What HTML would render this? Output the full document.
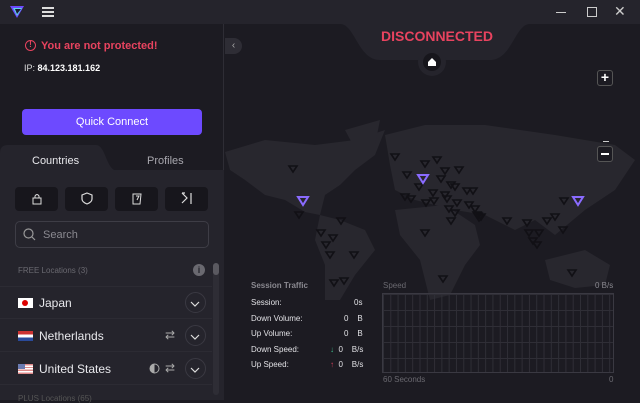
<!DOCTYPE html>
<html><head><style>
*{margin:0;padding:0;box-sizing:border-box}
body{width:640px;height:400px;overflow:hidden;background:#1c1b22;font-family:"Liberation Sans",sans-serif;color:#e8e8ec;position:relative}
.abs{position:absolute}
.tb{left:0;top:0;width:640px;height:24px;background:#25242c}
.left{left:0;top:24px;width:224px;height:376px;background:#1c1b22;border-right:1px solid #2e2d35}
.fbtn{position:absolute;top:187px;width:43px;height:24px;background:#17161c;border-radius:4px}
.row{position:absolute;left:0;width:212px;height:32px;border-bottom:1px solid #2c2b33;font-size:12px}
.chev{position:absolute;right:6px;top:5px;width:21px;height:21px;border:1px solid #3a3942;border-radius:50%}
.st{font-size:8px;color:#e0e0e4;position:absolute}
</style></head><body>
<div class="abs tb"></div>
<svg class="abs" style="left:9px;top:4px" width="16" height="16" viewBox="0 0 16 16"><path d="M1 2 L15 2 L8 14Z" fill="#6d4aff"/><path d="M4 4 L13 4 L8 12Z" fill="#5cd4e8"/><path d="M6 5 L12 5 L8 10Z" fill="#1a1a30"/></svg>
<div class="abs" style="left:42px;top:7px;width:12px;height:2px;background:#ddd;box-shadow:0 4px #ddd,0 8px #ddd"></div>
<div class="abs" style="left:556px;top:12px;width:10px;height:1px;background:#ccc"></div>
<div class="abs" style="left:587px;top:7px;width:10px;height:10px;border:1px solid #ccc"></div>
<div class="abs" style="left:614px;top:3px;font-size:14px;color:#ccc">✕</div>
<!-- map -->
<svg class="abs" style="left:225px;top:100px" width="415" height="200">
<g fill="#28272e">
<path d="M0 52 L40 40 L90 45 L130 40 L160 30 L150 55 L130 70 L115 85 L100 95 L95 115 L80 112 L60 100 L40 95 L20 80 L5 70Z"/>
<path d="M95 115 L115 120 L140 130 L150 150 L130 175 L115 200 L100 200 L100 165 L90 140Z"/>
<path d="M160 35 L200 25 L260 25 L330 35 L390 45 L410 60 L390 90 L360 110 L330 135 L310 120 L290 130 L260 115 L230 110 L210 105 L190 100 L170 90 L165 65Z"/>
<path d="M170 110 L220 105 L250 125 L255 145 L240 165 L225 195 L205 200 L195 160 L175 135Z"/>
<path d="M320 160 L360 150 L385 165 L380 185 L350 188 L325 180Z"/>
<path d="M120 30 L155 20 L150 45 L128 45Z"/>
</g></svg>
<svg class="abs" style="left:225px;top:120px" width="415" height="180" fill="none" stroke="#111015" stroke-width="1.6">
<g id="t"></g>
<path d="M64 46 l8 0 l-4 6z M166 34 l8 0 l-4 6z M196 41 l8 0 l-4 6z M208 37 l8 0 l-4 6z M216 48 l8 0 l-4 6z M230 47 l8 0 l-4 6z M178 52 l8 0 l-4 6z M212 56 l8 0 l-4 6z M222 62 l8 0 l-4 6z M190 64 l8 0 l-4 6z M204 70 l8 0 l-4 6z M216 72 l8 0 l-4 6z M226 64 l8 0 l-4 6z M238 68 l8 0 l-4 6z M176 74 l8 0 l-4 6z M182 76 l8 0 l-4 6z M205 78 l8 0 l-4 6z M218 76 l8 0 l-4 6z M228 80 l8 0 l-4 6z M226 90 l8 0 l-4 6z M240 82 l8 0 l-4 6z M220 86 l8 0 l-4 6z M246 86 l8 0 l-4 6z M197 80 l8 0 l-4 6z M244 68 l8 0 l-4 6z M70 92 l8 0 l-4 6z M112 98 l8 0 l-4 6z M92 110 l8 0 l-4 6z M104 115 l8 0 l-4 6z M97 122 l8 0 l-4 6z M101 132 l8 0 l-4 6z M125 132 l8 0 l-4 6z M105 160 l8 0 l-4 6z M115 158 l8 0 l-4 6z M196 110 l8 0 l-4 6z M214 156 l8 0 l-4 6z M248 92 l8 0 l-4 6z M252 94 l8 0 l-4 6z M222 98 l8 0 l-4 6z M249 93 l8 0 l-4 6z M249 93 l8 0 l-4 6z M250 95 l8 0 l-4 6z M249 93 l8 0 l-4 6z M250 95 l8 0 l-4 6z M249 93 l8 0 l-4 6z M249 93 l8 0 l-4 6z M249 93 l8 0 l-4 6z M249 93 l8 0 l-4 6z M249 93 l8 0 l-4 6z M249 93 l8 0 l-4 6z M249 93 l8 0 l-4 6z M249 93 l8 0 l-4 6z M249 93 l8 0 l-4 6z M249 93 l8 0 l-4 6z M250 95 l8 0 l-4 6z M249 93 l8 0 l-4 6z M250 95 l8 0 l-4 6z M249 93 l8 0 l-4 6z M249 93 l8 0 l-4 6z M249 93 l8 0 l-4 6z M249 93 l8 0 l-4 6z M249 93 l8 0 l-4 6z M249 93 l8 0 l-4 6z M249 93 l8 0 l-4 6z M249 93 l8 0 l-4 6z M249 93 l8 0 l-4 6z M249 93 l8 0 l-4 6z M249 93 l8 0 l-4 6z M249 93 l8 0 l-4 6z M278 98 l8 0 l-4 6z M298 100 l8 0 l-4 6z M318 98 l8 0 l-4 6z M326 94 l8 0 l-4 6z M334 107 l8 0 l-4 6z M300 110 l8 0 l-4 6z M310 110 l8 0 l-4 6z M304 118 l8 0 l-4 6z M308 122 l8 0 l-4 6z M335 78 l8 0 l-4 6z M343 150 l8 0 l-4 6z"/>
</svg>
<svg class="abs" style="left:225px;top:120px" width="415" height="180" fill="none" stroke="#8a6bff" stroke-width="2"><path d="M73 77 h10 l-5 8z M193 55 h10 l-5 8z M348 77 h10 l-5 8z"/></svg>
<!-- disconnected tab -->
<svg class="abs" style="left:340px;top:24px" width="190" height="40"><path d="M0 0 H190 C175 0 172 36 150 36 H40 C18 36 15 0 0 0Z" fill="#25242c"/></svg>
<div class="abs" style="left:381px;top:28px;font-size:14px;font-weight:bold;color:#e8435f">DISCONNECTED</div>
<div class="abs" style="left:418px;top:48px;width:28px;height:28px;border-radius:50%;background:#25242c"></div>
<div class="abs" style="left:423px;top:53px;width:18px;height:18px;border-radius:50%;background:#17161c"></div>
<svg class="abs" style="left:427px;top:57px" width="10" height="10"><path d="M1 5 L5 1 L9 5 V9 H1Z" fill="#fff"/></svg>
<div class="abs" style="left:225px;top:38px;width:17px;height:16px;border-radius:0 8px 8px 0;background:#2e2d35;color:#aaa;font-size:10px;text-align:center;line-height:16px">‹</div>
<!-- zoom controls -->
<div class="abs" style="left:597px;top:70px;width:16px;height:16px;border:1px solid #555;border-radius:3px;background:#1c1b22;color:#fff;font-size:14px;text-align:center;line-height:13px;font-weight:bold">+</div>
<div class="abs" style="left:603px;top:141px;width:6px;height:1px;background:#ccc"></div>
<div class="abs" style="left:597px;top:146px;width:16px;height:16px;border:1px solid #555;border-radius:3px;background:#1c1b22"></div>
<div class="abs" style="left:601px;top:153px;width:8px;height:2px;background:#fff"></div>
<!-- stats -->
<div class="st" style="left:251px;top:281px;color:#8a8990;font-weight:bold">Session Traffic</div>
<div class="st" style="left:251px;top:298px">Session:</div><div class="st" style="left:354px;top:298px">0s</div>
<div class="st" style="left:251px;top:314px">Down Volume:</div><div class="st" style="left:344px;top:314px">0&nbsp;&nbsp;&nbsp;&nbsp;B</div>
<div class="st" style="left:251px;top:329px">Up Volume:</div><div class="st" style="left:344px;top:329px">0&nbsp;&nbsp;&nbsp;&nbsp;B</div>
<div class="st" style="left:251px;top:345px">Down Speed:</div><div class="st" style="left:330px;top:345px"><span style="color:#3fb88a">↓</span>&nbsp;&nbsp;0&nbsp;&nbsp;&nbsp;&nbsp;B/s</div>
<div class="st" style="left:251px;top:360px">Up Speed:</div><div class="st" style="left:330px;top:360px"><span style="color:#d0405a">↑</span>&nbsp;&nbsp;0&nbsp;&nbsp;&nbsp;&nbsp;B/s</div>
<div class="st" style="left:383px;top:281px;color:#6a6970">Speed</div><div class="st" style="left:595px;top:281px;color:#8a8990">0 B/s</div>
<div class="abs" style="left:382px;top:293px;width:232px;height:80px;border:1px solid #3a3942;background-image:linear-gradient(90deg,#2f2e36 1px,transparent 1px),linear-gradient(#2f2e36 1px,transparent 1px);background-size:7.3px 100%,100% 16px"></div>
<div class="st" style="left:383px;top:375px;color:#6a6970">60 Seconds</div><div class="st" style="left:609px;top:375px;color:#6a6970">0</div>
<!-- left panel -->
<div class="abs left"></div>
<div class="abs" style="left:0;top:170px;width:224px;height:230px;background:#25242c"></div>
<svg class="abs" style="left:0;top:145px" width="224" height="26"><path d="M0 26 V8 Q0 0 8 0 H96 C106 0 106 26 118 26Z" fill="#25242c"/></svg>
<div class="abs" style="left:25px;top:40px;width:11px;height:11px;border:1.5px solid #e8435f;border-radius:50%;background:#1c1b22;color:#e8435f;font-size:8px;font-weight:bold;text-align:center;line-height:8px">!</div>
<div class="abs" style="left:41px;top:40px;font-size:11px;font-weight:bold;color:#e8435f">You are not protected!</div>
<div class="abs" style="left:24px;top:63px;font-size:9px;color:#ddd">IP: <b style="color:#fff">84.123.181.162</b></div>
<div class="abs" style="left:22px;top:109px;width:180px;height:26px;border-radius:4px;background:#6d4aff;color:#fff;font-size:11px;text-align:center;line-height:26px">Quick Connect</div>
<div class="abs" style="left:32px;top:155px;font-size:11px;color:#e8e8ec">Countries</div>
<div class="abs" style="left:147px;top:155px;font-size:11px;color:#a8a7ae">Profiles</div>
<div class="fbtn" style="left:15px"></div><div class="fbtn" style="left:65px"></div><div class="fbtn" style="left:115px"></div><div class="fbtn" style="left:165px"></div>
<svg class="abs" style="left:31px;top:193px" width="12" height="12"><rect x="2" y="5" width="8" height="6" fill="none" stroke="#ddd"/><path d="M4 5 V3 Q6 0 8 3 V5" fill="none" stroke="#ddd"/></svg>
<svg class="abs" style="left:81px;top:192px" width="12" height="13"><path d="M6 1 L11 3 V7 Q11 10 6 12 Q1 10 1 7 V3Z" fill="none" stroke="#ddd" stroke-width="1.2"/></svg>
<svg class="abs" style="left:131px;top:192px" width="12" height="13"><path d="M2 2 H10 L9 12 H2Z M5 4 L8 4 L6 8" fill="none" stroke="#ddd"/></svg>
<svg class="abs" style="left:180px;top:192px" width="14" height="13"><path d="M2 1 L7 6 L2 11 M11 1 V12 M2 1 H5" fill="none" stroke="#ddd" stroke-width="1.2"/></svg>
<div class="abs" style="left:15px;top:221px;width:194px;height:27px;border:1px solid #3e3d46;border-radius:5px"></div>
<svg class="abs" style="left:23px;top:228px" width="13" height="13"><circle cx="5.5" cy="5.5" r="4.5" fill="none" stroke="#999" stroke-width="1.2"/><path d="M9 9 L12 12" stroke="#999" stroke-width="1.2"/></svg>
<div class="abs" style="left:43px;top:229px;font-size:11px;color:#8a8990">Search</div>
<div class="abs" style="left:18px;top:266px;font-size:8px;color:#6a6970">FREE Locations (3)</div>
<div class="abs" style="left:193px;top:264px;width:12px;height:12px;border-radius:50%;background:#6a6970;color:#25242c;font-size:9px;font-weight:bold;text-align:center;line-height:12px">i</div>
<div class="abs" style="left:213px;top:263px;width:6px;height:132px;border-radius:3px;background:#2e2d35"></div>
<div class="abs" style="left:213px;top:263px;width:6px;height:12px;border-radius:3px;background:#5a5960"></div>
<div class="abs" style="left:0;top:286px;width:212px;border-top:1px solid #2c2b33"></div>
<div class="row" style="top:287px"><div class="abs" style="left:18px;top:11px;width:15px;height:10px;background:#fff"><div class="abs" style="left:4px;top:2px;width:6px;height:6px;border-radius:50%;background:#d00"></div></div><div class="abs" style="left:39px;top:9px">Japan</div><div class="chev"></div></div>
<div class="row" style="top:320px"><div class="abs" style="left:18px;top:11px;width:15px;height:10px;background:linear-gradient(#c33 33%,#fff 33% 66%,#2a4a9a 66%)"></div><div class="abs" style="left:39px;top:9px">Netherlands</div><div class="abs" style="left:165px;top:8px;color:#aaa;font-size:12px">⇄</div><div class="chev"></div></div>
<div class="row" style="top:353px"><div class="abs" style="left:18px;top:11px;width:15px;height:10px;background:repeating-linear-gradient(#d88 0 1.4px,#fff 1.4px 2.8px)"><div class="abs" style="left:0;top:0;width:7px;height:5px;background:#6a7ab0"></div></div><div class="abs" style="left:39px;top:9px">United States</div><svg class="abs" style="left:149px;top:10px" width="11" height="11"><circle cx="5.5" cy="5.5" r="4.5" fill="none" stroke="#aaa"/><path d="M5.5 1 A4.5 4.5 0 0 0 5.5 10Z" fill="#aaa"/></svg><div class="abs" style="left:165px;top:8px;color:#aaa;font-size:12px">⇄</div><div class="chev"></div></div>
<svg class="abs" style="left:189px;top:298px" width="12" height="100"><path d="M2 4 L6 8 L10 4 M2 37 L6 41 L10 37 M2 70 L6 74 L10 70" fill="none" stroke="#ddd" stroke-width="1.2"/></svg>
<div class="abs" style="left:18px;top:394px;font-size:8px;color:#555">PLUS Locations (65)</div>
</body></html>
